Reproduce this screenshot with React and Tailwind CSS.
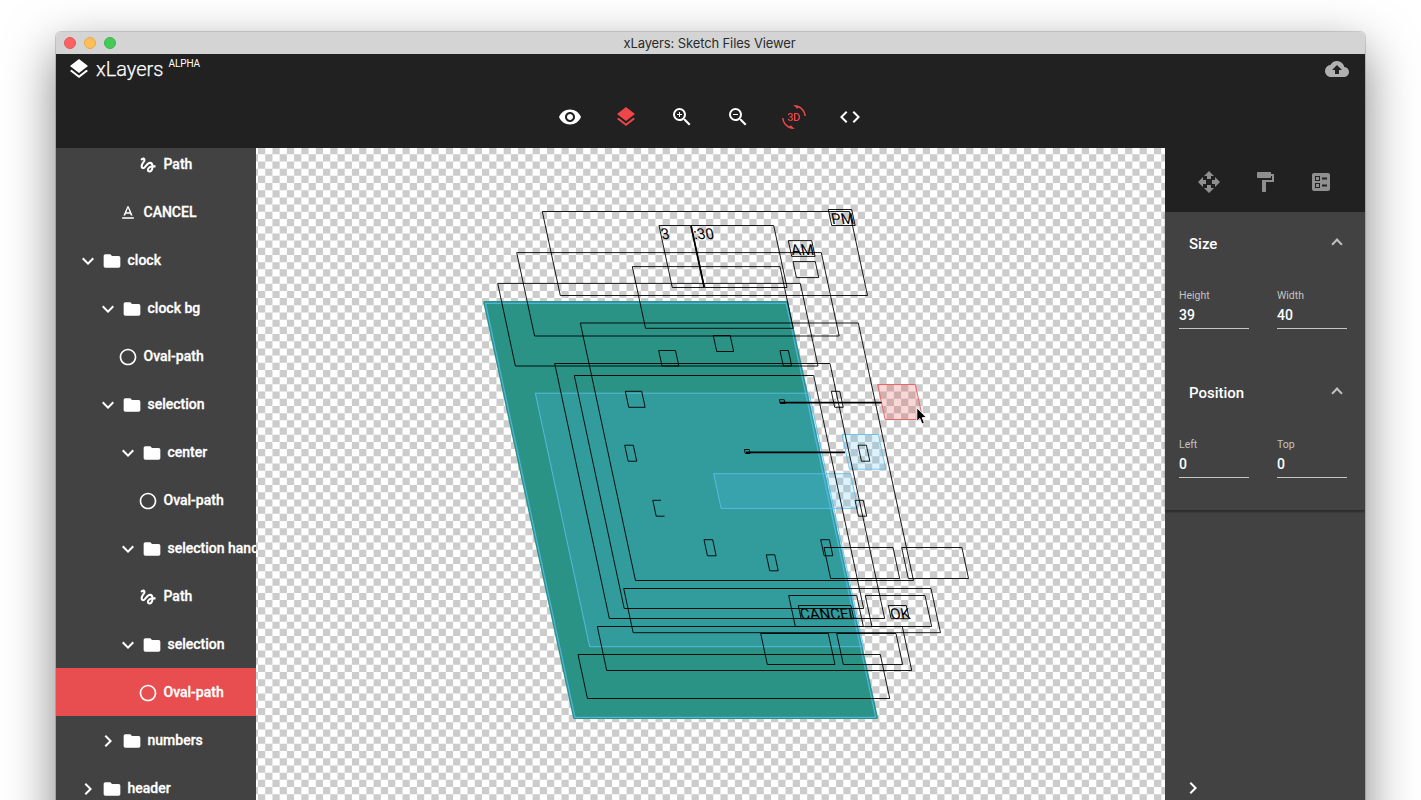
import {
  Md3dRotation,
  MdBackup,
  MdBallot,
  MdChevronRight,
  MdCode,
  MdExpandMore,
  MdFolder,
  MdFormatPaint,
  MdGesture,
  MdLayers,
  MdOpenWith,
  MdPanoramaFishEye,
  MdTextFormat,
  MdVisibility,
  MdZoomIn,
  MdZoomOut,
} from "react-icons/md";

const SLOPE = 0.2143;

const layers = [
  { kind: "leaf", icon: MdGesture, name: "Path", pad: "pl-[82px]" },
  { kind: "leaf", icon: MdTextFormat, name: "CANCEL", pad: "pl-[62px]" },
  { kind: "open", name: "clock", pad: "pl-[20px]" },
  { kind: "open", name: "clock bg", pad: "pl-[40px]" },
  { kind: "leaf", icon: MdPanoramaFishEye, name: "Oval-path", pad: "pl-[62px]" },
  { kind: "open", name: "selection", pad: "pl-[40px]" },
  { kind: "open", name: "center", pad: "pl-[60px]" },
  { kind: "leaf", icon: MdPanoramaFishEye, name: "Oval-path", pad: "pl-[82px]" },
  { kind: "open", name: "selection hand", pad: "pl-[60px]" },
  { kind: "leaf", icon: MdGesture, name: "Path", pad: "pl-[82px]" },
  { kind: "open", name: "selection", pad: "pl-[60px]" },
  { kind: "leaf", icon: MdPanoramaFishEye, name: "Oval-path", pad: "pl-[82px]", active: true },
  { kind: "closed", name: "numbers", pad: "pl-[40px]" },
  { kind: "closed", name: "header", pad: "pl-[20px]" },
];

// Layer outlines: [left, top, right, bottom] of the sheared boxes.
const outlines = [
  [542.3, 211.5, 849.5, 295.5],
  [516.7, 252.6, 821.3, 336],
  [497.7, 283.4, 800.3, 366],
  [632.3, 266.6, 780, 328.3],
  [659, 225.5, 690.6, 287.5],
  [691.3, 225.5, 773.7, 287.5],
  [580.3, 323, 858.3, 580.5],
  [554.7, 363.5, 830, 618.5],
  [574.3, 375.5, 813.7, 608.5],
  [623.7, 588.5, 931, 632.7],
  [597.3, 626.5, 902.3, 670.5],
  [578, 654.5, 880.3, 698.5],
  [824, 547.5, 893, 578.5],
  [901.7, 547.5, 961.9, 578.5],
  [788.7, 595.5, 856.7, 626.5],
  [865.3, 595.5, 925, 626.5],
  [760.7, 633.5, 828.3, 664.5],
  [836.7, 633.5, 896, 664.5],
  [798.3, 605.5, 851, 618.7],
  [888.3, 605.5, 906.3, 618.7],
  [788.3, 240.6, 811.7, 256.4],
  [793, 261.6, 815.3, 277.6],
  [828.3, 209.5, 851.7, 225.5],
  [713.3, 335.5, 730.2, 351.5],
  [658.7, 350.5, 675.5, 366],
  [780, 350.5, 788.4, 366],
  [625.3, 391.3, 641.7, 407.3],
  [831.3, 391.3, 839.8, 407.3],
  [624.7, 445.2, 633.3, 461.2],
  [858, 445.2, 866.4, 461.2],
  [855, 500.3, 863.3, 516.2],
  [704, 539.7, 712.7, 555.8],
  [820.7, 539.7, 829.4, 555.8],
  [766.3, 554.8, 774.8, 570.8],
  [779.4, 399.7, 784.2, 403.5],
  [744.4, 449.5, 749.2, 453.5],
];

function box([x1, y1, x2, y2], slope = SLOPE) {
  const d = (y2 - y1) * slope;
  return `M${x1} ${y1}L${x2} ${y1}L${x2 + d} ${y2}L${x1 + d} ${y2}Z`;
}

function checkerPath() {
  const cw = 7.226;
  const ch = 7.19;
  let d = "";
  for (let r = 0; r < 92; r++) {
    for (let c = -1; c < 127; c++) {
      if ((r + c) % 2 === 0) {
        d += `M${(258 + c * cw).toFixed(2)} ${(147.1 + r * ch).toFixed(2)}h${cw}v${ch}h-${cw}z`;
      }
    }
  }
  return d;
}

const labels = [
  ["3", 662, 239.4],
  [":30", 694.4, 239.4],
  ["AM", 792, 254.6],
  ["PM", 832.2, 223.6],
  ["CANCEL", 801, 618.8],
  ["OK", 891.2, 618.8],
];

function Artboard() {
  return (
    <svg viewBox="256 148 909 652" className="block h-[652px] w-[909px] shrink-0 bg-white">
      <path d={checkerPath()} fill="#cccccc" />
      <path d={box([484.4, 302.3, 787, 717.7], 0.2162)} fill="#2b9386" stroke="#2b9386" strokeWidth="2.4" strokeLinejoin="round" />
      <path d={box([485.5, 303.4, 786.2, 717.3], 0.2162)} fill="none" stroke="#4fb4da" strokeWidth="1.2" />
      <g fill="#4fc3f7" fillOpacity="0.2" stroke="#5ebdec" strokeOpacity="0.85">
        <path d={box([535.3, 393.2, 809.3, 646.7])} />
        <path d={box([713.7, 473.7, 850.5, 508.4])} />
        <path d={box([842, 434.5, 878.4, 469.2])} />
      </g>
      <path d={box([877.6, 384.5, 915.4, 419.5])} fill="#e53935" fillOpacity="0.2" stroke="#e8686a" />
      <g fill="none" stroke="#000" strokeOpacity="0.9">
        {outlines.map((o, i) => (
          <path key={i} d={box(o)} />
        ))}
        <path d="M661 500.3H652.8L656.2 516.2H664.6" />
      </g>
      <path d="M691 225.5L704.3 287.5" stroke="#000" strokeWidth="1.4" />
      <path d="M780 402.6H881.5M746 452.4H845" stroke="#000" strokeWidth="1.9" />
      <g fontFamily="Roboto, sans-serif" fontSize="15" fill="#000">
        {labels.map(([t, x, y]) => (
          <text key={t} transform={`translate(${x} ${y}) skewX(11)`}>
            {t}
          </text>
        ))}
      </g>
      <path
        d="M916.8 407.8V421.4L919.8 418.5L922 424L924.4 423L922.2 417.6H926.4Z"
        fill="#000"
        stroke="#fff"
        strokeWidth="0.9"
      />
    </svg>
  );
}

function LayerRow({ item }) {
  const Icon = item.icon;
  const Arrow = item.kind === "open" ? MdExpandMore : MdChevronRight;
  return (
    <div
      className={`flex h-12 shrink-0 items-center whitespace-nowrap text-sm font-medium text-white ${item.pad} ${
        item.active ? "bg-[#e84d50]" : ""
      }`}
    >
      {item.kind === "leaf" ? (
        <Icon className="mt-px mr-[5.5px] size-5 shrink-0" />
      ) : (
        <>
          <Arrow className="mt-0.5 mr-[2px] size-6 shrink-0" />
          <MdFolder className="mt-0.5 mr-[5.5px] size-5 shrink-0" />
        </>
      )}
      <span className="[-webkit-text-stroke:0.3px_white]">{item.name}</span>
    </div>
  );
}

function Field({ label, value }) {
  return (
    <label className="flex w-[70px] flex-col border-b border-[#c6c6c6]">
      <span className="pt-px text-[10.5px] leading-[14px] text-[#c3c3c3]">{label}</span>
      <span className="mt-[2px] h-[23px] text-sm leading-5 font-medium text-white">{value}</span>
    </label>
  );
}

function Section({ title, fields }) {
  return (
    <section className="flex h-[149px] flex-col">
      <div className="flex h-16 items-center justify-between pr-[24px] pl-6">
        <h2 className="text-[15px] font-medium text-white">{title}</h2>
        <span className="size-2 rotate-45 border-t-2 border-l-2 border-[#c0c0c0]" />
      </div>
      <div className="flex gap-7 pt-[12px] pl-3.5">
        {fields.map(([label, value]) => (
          <Field key={label} label={label} value={value} />
        ))}
      </div>
    </section>
  );
}

export default function App() {
  return (
    <div className="h-[800px] w-[1421px] overflow-hidden bg-white pt-8 pl-14 font-[Roboto,sans-serif]">
      <div className="flex h-[900px] w-[1309px] flex-col overflow-hidden rounded-t-[5px] shadow-[0_0_0_1px_rgba(0,0,0,0.16),0_18px_50px_rgba(0,0,0,0.5)]">
        <div className="flex h-[22px] shrink-0 items-center bg-[#d4d4d4] pl-2">
          <div className="flex w-[70px] gap-2">
            <span className="size-3 rounded-full border border-[#e2585a] bg-[#fb6264]" />
            <span className="size-3 rounded-full border border-[#e5ab4c] bg-[#fdbf57]" />
            <span className="size-3 rounded-full border border-[#3cb54c] bg-[#44ca56]" />
          </div>
          <div className="flex-1 pt-0.5 pr-[80px] text-center font-[Inter,sans-serif] text-[13px] tracking-[-0.12px] text-[#2b2b2b]">
            xLayers: Sketch Files Viewer
          </div>
        </div>

        <header className="flex h-[94px] shrink-0 flex-col bg-[#212121]">
          <div className="flex h-[30px] items-center justify-between pr-4 pl-[11px]">
            <div className="flex items-center text-white">
              <MdLayers className="size-6" />
              <span className="ml-[5px] text-xl font-light [-webkit-text-stroke:0.25px_white]">xLayers</span>
              <span className="mb-[10px] ml-[5px] text-[10px] leading-3 tracking-[-0.1px]">ALPHA</span>
            </div>
            <MdBackup className="size-6 text-[#b0b0b0]" />
          </div>
          <nav className="flex flex-1 items-center justify-center gap-8 pt-0.5 pr-px text-white">
            <MdVisibility className="size-6" />
            <MdLayers className="size-6 text-[#ec4648]" />
            <MdZoomIn className="size-6" />
            <MdZoomOut className="size-6" />
            <Md3dRotation className="size-6 text-[#ec4648]" />
            <MdCode className="size-6" />
          </nav>
        </header>

        <main className="flex h-[652px] shrink-0">
          <aside className="flex w-[200px] shrink-0 flex-col overflow-hidden bg-[#424242]">
            <div className="-mt-2 flex flex-col">
              {layers.map((item, i) => (
                <LayerRow key={i} item={item} />
              ))}
            </div>
          </aside>

          <Artboard />

          <aside className="flex w-[200px] shrink-0 flex-col bg-[#424242]">
            <div className="flex h-16 shrink-0 items-center justify-center gap-8 bg-[#212121] pt-1 text-[#8f8f8f]">
              <MdOpenWith className="size-6" />
              <MdFormatPaint className="size-6" />
              <MdBallot className="size-6" />
            </div>
            <div className="h-[298px] shrink-0 shadow-[0_2px_2px_rgba(0,0,0,0.35)]">
              <Section title="Size" fields={[["Height", "39"], ["Width", "40"]]} />
              <Section title="Position" fields={[["Left", "0"], ["Top", "0"]]} />
            </div>
            <div className="flex flex-1 items-end pl-4">
              <MdChevronRight className="size-6 text-white" />
            </div>
          </aside>
        </main>
      </div>
    </div>
  );
}
